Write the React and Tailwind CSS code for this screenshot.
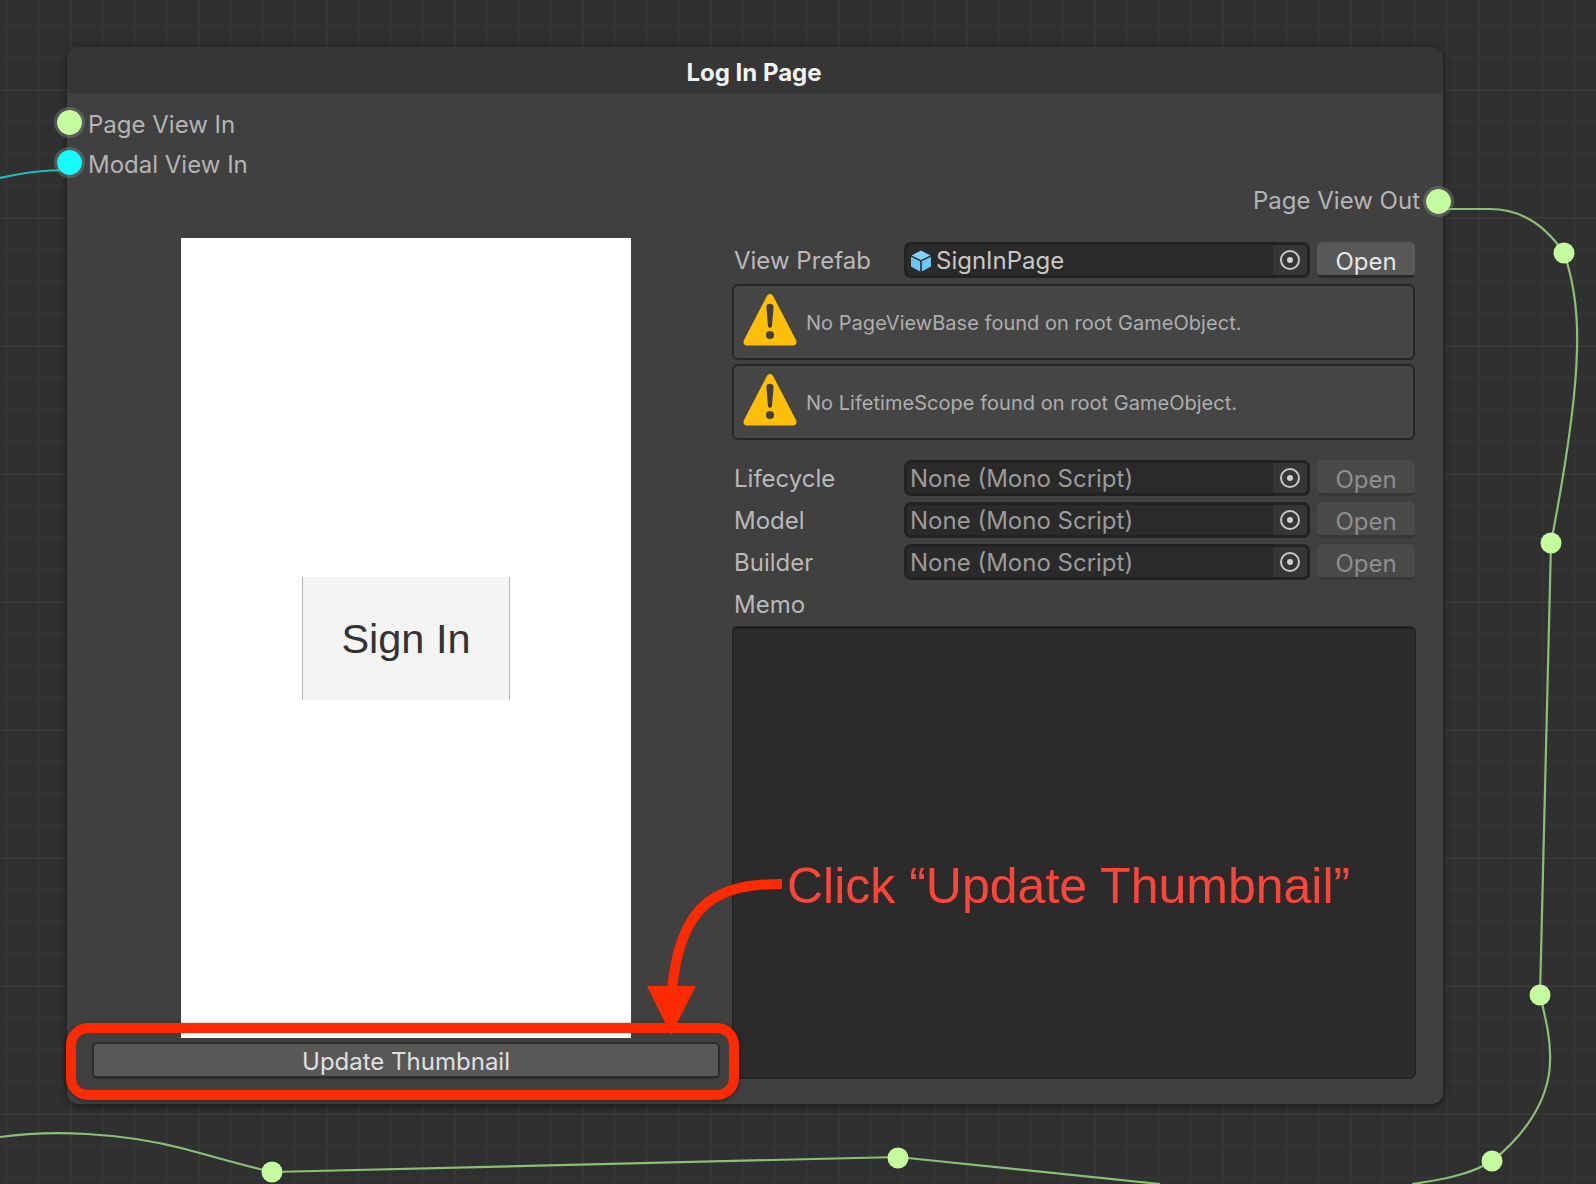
const WIRES = [
  'M1443 209 L1490 209 C1520 209 1545 225 1564 253',
  'M1564 253 C1575 285 1578 320 1577 350 C1576 400 1565 470 1551 543',
  'M1551 543 L1540 995',
  'M1540 995 C1546 1020 1551 1040 1550 1062 C1549 1100 1525 1135 1492 1161',
  'M1492 1161 C1470 1175 1440 1180 1412 1184',
  'M0 1137 C50 1130 120 1132 185 1149 C215 1157 245 1166 272 1172',
  'M272 1172 L898 1157',
  'M898 1157 L1160 1184',
];

const JOINTS = [
  [1564, 253],
  [1551, 543],
  [1540, 995],
  [1492, 1161],
  [898, 1158],
  [272, 1172],
];

function Wires() {
  return (
    <svg className="absolute inset-0" width="1596" height="1184" viewBox="0 0 1596 1184" fill="none">
      {WIRES.map((d) => (
        <path key={d} d={d} stroke="#8cbf76" strokeWidth="2.2" />
      ))}
      <path d="M0 178 C20 173 45 170 68 170" stroke="#1fbdbd" strokeWidth="2.2" />
      {JOINTS.map(([cx, cy]) => (
        <circle key={`${cx}-${cy}`} cx={cx} cy={cy} r="10.5" fill="#c5fb9f" />
      ))}
    </svg>
  );
}

function Port({ className }) {
  return <span className={`absolute h-[31px] w-[31px] rounded-full border-[3px] border-[#8b8b8b]/40 bg-clip-padding ${className}`} />;
}

function CubeIcon() {
  return (
    <svg width="20" height="22" viewBox="0 0 20 22" className="shrink-0">
      <path d="M10 0.5 L19.5 5.5 L10 10 L0.5 5.5 Z" fill="#7fd2fa" />
      <path d="M0 6.8 L9.2 11.2 V21.5 L0 16.6 Z" fill="#6cc6f5" />
      <path d="M20 6.8 L10.8 11.2 V21.5 L20 16.6 Z" fill="#6cc6f5" />
    </svg>
  );
}

function TargetIcon() {
  return (
    <span className="flex w-[34px] shrink-0 items-center justify-center self-stretch bg-[#363636]">
      <span className="flex size-[20px] items-center justify-center rounded-full border-2 border-[#c8c8c8]">
        <span className="size-[6px] rounded-full bg-[#d0d0d0]" />
      </span>
    </span>
  );
}

function WarningIcon() {
  return (
    <svg width="54" height="54" viewBox="0 0 54 54" className="shrink-0 -translate-y-[3px]">
      <path d="M27 2 C28.6 2 29.6 3 30.4 4.6 L53 48 C54.4 51 53 53.5 50 53.5 H4 C1 53.5 -0.4 51 1 48 L23.6 4.6 C24.4 3 25.4 2 27 2 Z" fill="#ffbe0a" />
      <path d="M23.4 15 C23.4 10.6 30.6 10.6 30.6 15 L29 34 C28.8 36.4 25.2 36.4 25 34 Z" fill="#3e3e3e" />
      <circle cx="27" cy="43" r="4" fill="#3e3e3e" />
    </svg>
  );
}

function ObjectRow({ label, value, icon, active }) {
  return (
    <div className="flex h-[36px] items-center pr-px">
      <span className="w-[172px] shrink-0 pl-[2px] pt-[2px] text-[24px] text-[#b9b9b9]">{label}</span>
      <div className="flex h-[36px] w-[406px] shrink-0 items-center overflow-hidden rounded-[7px] border-[3px] border-[#222222] bg-[#2a2a2a]">
        <span className={`flex min-w-0 flex-1 items-center gap-[5px] pt-[2px] text-[24px] ${active ? 'pl-[4px] text-[#c8c8c8]' : 'pl-[3px] text-[#9b9b9b]'}`}>
          {icon}
          {value}
        </span>
        <TargetIcon />
      </div>
      <button
        className={`ml-[7px] h-[36px] w-[98px] shrink-0 rounded-[5px] border-b-[3px] pt-[2px] text-center text-[24px] ${active ? 'border-[#2a2a2a] bg-[#585858] text-[#e6e6e6]' : 'border-[#383838] bg-[#4a4a4a] text-[#8f8f8f]'}`}
      >
        Open
      </button>
    </div>
  );
}

function WarningBox({ children }) {
  return (
    <div className="mr-px flex h-[76px] items-center gap-[9px] rounded-[6px] border-2 border-[#262626] bg-[#454545] pl-[9px] text-[20px] tracking-[0.03px] text-[#aeaeae]">
      <WarningIcon />
      <span className="pt-[1px]">{children}</span>
    </div>
  );
}

function LogInNode() {
  return (
    <div className="absolute left-[67px] top-[46px] flex h-[1058px] w-[1376px] flex-col rounded-[12px] bg-[#404040] shadow-[0_2px_8px_rgba(0,0,0,0.5)]">
      <div className="flex h-[47px] shrink-0 items-center justify-center rounded-t-[12px] border-t border-[#2a2a2a] bg-[#363636] pr-[2px] pt-[5px] text-[24px] font-bold text-[#f2f2f2]">
        Log In Page
      </div>

      <div className="flex flex-1 flex-col px-[25px] pb-[25px] pr-[27px] pt-[11px] text-[24px] text-[#b4b4b4]">
        <div className="-ml-[4px] flex h-[40px] items-center pt-[2px]">Page View In</div>
        <div className="-ml-[4px] flex h-[40px] items-center pt-[2px]">Modal View In</div>
        <div className="-mr-[4px] flex h-[37px] items-center justify-end pb-[3px]">Page View Out</div>

        <div className="mt-[17px] flex min-h-0 flex-1 gap-[12px]">
          {/* Left column: thumbnail and button */}
          <div className="flex w-[628px] shrink-0 flex-col items-center gap-[4px]">
            <div className="flex h-[800px] w-[450px] items-center justify-center bg-white">
              <div className="flex h-[123px] w-[208px] items-center justify-center border-x border-[#b8b8b8] bg-[#f4f4f4] pt-[2px] text-[41.5px] text-[#333333] [font-family:'Liberation_Sans',sans-serif]">
                Sign In
              </div>
            </div>
            <button className="h-[37px] w-full rounded-[5px] border-2 border-b-[3px] border-[#2c2c2c] bg-[#585858] text-center text-[24px] text-[#e0e0e0]">
              Update Thumbnail
            </button>
          </div>

          {/* Right column: fields */}
          <div className="flex min-w-0 flex-1 flex-col pt-[4px]">
            <ObjectRow label="View Prefab" value="SignInPage" icon={<CubeIcon />} active />
            <div className="mt-[6px] flex flex-col gap-[4px]">
              <WarningBox>No PageViewBase found on root GameObject.</WarningBox>
              <WarningBox>No LifetimeScope found on root GameObject.</WarningBox>
            </div>
            <div className="mt-[20px] flex flex-col gap-[6px]">
              <ObjectRow label="Lifecycle" value="None (Mono Script)" />
              <ObjectRow label="Model" value="None (Mono Script)" />
              <ObjectRow label="Builder" value="None (Mono Script)" />
            </div>
            <div className="flex h-[46px] items-center pl-[2px] pt-[4px] text-[#b9b9b9]">Memo</div>
            <div className="min-h-0 flex-1 rounded-[6px] border-x border-b border-t-[3px] border-[#1f1f1f] bg-[#2b2b2b]" />
          </div>
        </div>
      </div>
    </div>
  );
}

function Annotation() {
  return (
    <>
      <div className="absolute left-[66px] top-[1023px] h-[77px] w-[673px] rounded-[22px] border-[10px] border-[#ff2a00] shadow-[0_1px_4px_rgba(0,0,0,0.45)]" />
      <svg className="absolute inset-0" width="1596" height="1184" viewBox="0 0 1596 1184" fill="none">
        <path d="M782 884 C720 884 680 900 672 990" stroke="#ff2a00" strokeWidth="10" />
        <path d="M647 986 L696 986 L671 1035 Z" fill="#ff2a00" />
      </svg>
      <div className="absolute left-[787px] top-[856px] whitespace-nowrap text-[50px] leading-[60px] text-[#ff453a] [font-family:'Liberation_Sans',sans-serif]">
        Click “Update Thumbnail”
      </div>
    </>
  );
}

export default function App() {
  return (
    <div className="relative h-[1184px] w-[1596px] overflow-hidden bg-[#303030] bg-[linear-gradient(to_right,#383838_2px,transparent_2px),linear-gradient(to_bottom,#383838_2px,transparent_2px),linear-gradient(to_right,#343434_2px,transparent_2px),linear-gradient(to_bottom,#343434_2px,transparent_2px)] bg-[size:128px_128px,128px_128px,32px_32px,32px_32px] bg-[position:70px_0,0_89px,6px_0,0_25px] font-['Inter',sans-serif]">
      <Wires />
      <LogInNode />
      <Port className="left-[54px] top-[107px] bg-[#c5fb9f]" />
      <Port className="left-[54px] top-[147px] bg-[#15fbfb]" />
      <Port className="left-[1423px] top-[186px] bg-[#c5fb9f]" />
      <Annotation />
    </div>
  );
}
